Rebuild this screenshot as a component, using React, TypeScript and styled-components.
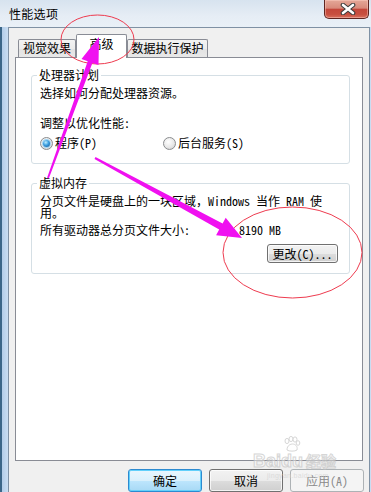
import React from "react";
import styled, { createGlobalStyle, css } from "styled-components";

const FONT = `"Noto Sans Mono CJK SC", "Noto Sans CJK SC", "Liberation Sans", sans-serif`;

const Global = createGlobalStyle`
  html, body { margin: 0; padding: 0; background: #2f5677; }
  body { font-family: ${FONT}; font-size: 12px; color: #000; }
  * { box-sizing: border-box; }
`;

const Window = styled.div`
  position: relative;
  width: 371px;
  height: 492px;
  overflow: hidden;
  display: flex;
  flex-direction: column;
  background: linear-gradient(
    to right,
    #3b6688 0px,
    #3b6688 2px,
    #b3cde9 2px,
    #c9ddf2 8px
  );
`;

const TitleBar = styled.div`
  height: 27px;
  flex: none;
  display: flex;
  align-items: flex-start;
  padding-left: 9px;
  background: linear-gradient(#d7e3ef, #e6edf5 60%, #e9f0f7);
`;

const TitleText = styled.span`
  margin-top: 7px;
  line-height: 14px;
  font-size: 12px;
  color: #000;
  letter-spacing: 0.3px;
`;

const CloseButton = styled.div`
  margin-left: auto;
  margin-right: 2px;
  width: 45px;
  height: 19px;
  border: 1px solid #5e2520;
  border-top: none;
  border-radius: 0 0 5px 5px;
  background: linear-gradient(
    #e4a898 0%,
    #d88a7b 45%,
    #c4473a 52%,
    #c85040 80%,
    #d8705e 100%
  );
  box-shadow: inset 0 0 0 1px rgba(255, 210, 200, 0.45);
  display: flex;
  align-items: center;
  justify-content: center;
  padding-left: 3px;
`;

const Body = styled.div`
  flex: 1;
  margin-left: 8px;
  margin-right: 1px;
  border: 1px solid #7f91a4;
  border-bottom: none;
  background: #f0f0f0;
  padding: 6px 5px 0 6px;
  display: flex;
  flex-direction: column;
`;

const TabRow = styled.div`
  height: 24px;
  margin-bottom: -1px;
  padding-left: 3px;
  display: flex;
  align-items: flex-end;
  position: relative;
  z-index: 1;
`;

const Tab = styled.div<{ $w: number; $active?: boolean }>`
  width: ${(p) => p.$w}px;
  flex: none;
  border: 1px solid #898c95;
  border-bottom: none;
  border-radius: 2px 2px 0 0;
  text-align: center;
  white-space: nowrap;
  ${(p) =>
    p.$active
      ? css`
          height: 24px;
          line-height: 18px;
          background: #ffffff;
        `
      : css`
          height: 18px;
          margin-bottom: 1px;
          line-height: 16px;
          background: linear-gradient(#f3f3f3, #ececec 50%, #e2e2e2 50%, #e8e8e8);
        `}
`;

const Panel = styled.div`
  width: 348px;
  height: 404px;
  flex: none;
  border: 1px solid #898c95;
  background: #ffffff;
  padding: 10px 12px 0 15px;
  display: flex;
  flex-direction: column;
`;

const GroupBox = styled.fieldset<{ $mt?: number; $pb: number }>`
  margin: ${(p) => p.$mt ?? 0}px 0 0 0;
  padding: 0 11px ${(p) => p.$pb}px 8px;
  min-width: 0;
  border: 1px solid #d5dfe5;
  border-radius: 3px;
`;

const Legend = styled.legend`
  margin-left: -3px;
  padding: 0 2px;
  line-height: 14px;
  font-size: 12px;
`;

const Line = styled.div<{ $mt: number; $lh?: number }>`
  margin-top: ${(p) => p.$mt}px;
  line-height: ${(p) => p.$lh ?? 14}px;
  white-space: nowrap;
`;

const RadioRow = styled.div`
  margin-top: 6px;
  height: 14px;
  display: flex;
  align-items: center;
`;

const RadioItem = styled.label<{ $w?: number }>`
  display: flex;
  align-items: center;
  gap: 2px;
  ${(p) => (p.$w ? `width: ${p.$w}px;` : "")}
  white-space: nowrap;
  line-height: 14px;
`;

const RadioCircle = styled.span<{ $checked?: boolean }>`
  position: relative;
  flex: none;
  width: 13px;
  height: 13px;
  border-radius: 50%;
  border: 1px solid #8a8c8e;
  background: radial-gradient(circle at 40% 35%, #ffffff 0%, #e8e8e8 55%, #c9c9c9 100%);
  ${(p) =>
    p.$checked &&
    css`
      &::after {
        content: "";
        position: absolute;
        left: 2px;
        top: 2px;
        width: 7px;
        height: 7px;
        border-radius: 50%;
        background: radial-gradient(circle at 40% 35%, #bfeeff 0%, #3b9ee0 45%, #0d4f8f 100%);
        box-shadow: 0 0 0 1px #9fd3f3;
      }
    `}
`;

const InfoRow = styled.div`
  margin-top: 4px;
  display: flex;
  line-height: 14px;
  white-space: nowrap;
`;

const InfoLabel = styled.span`
  width: 199px;
  flex: none;
`;

const GroupButtons = styled.div`
  margin-top: 7px;
  display: flex;
  justify-content: flex-end;
`;

const PushButton = styled.button<{ $w: number; $h: number; $variant?: "default" | "disabled" }>`
  width: ${(p) => p.$w}px;
  height: ${(p) => p.$h}px;
  padding: 0;
  font-family: ${FONT};
  font-size: 12px;
  line-height: 14px;
  color: #000;
  border-radius: 3px;
  border: 1px solid #707070;
  background: linear-gradient(#f2f2f2 0%, #ebebeb 50%, #dddddd 50%, #cfcfcf 100%);
  box-shadow: inset 0 0 0 1px rgba(255, 255, 255, 0.75);
  ${(p) =>
    p.$variant === "default" &&
    css`
      border-color: #2c8ad0;
      background: linear-gradient(#eaf6fd 0%, #d9f0fc 50%, #bee6fd 50%, #a7d9f5 100%);
      box-shadow: inset 0 0 0 1px #62d0fb;
    `}
  ${(p) =>
    p.$variant === "disabled" &&
    css`
      border-color: #adb2b5;
      background: #f4f4f4;
      color: #8a8a8a;
      box-shadow: none;
    `}
`;

const ButtonRow = styled.div`
  margin-top: 8px;
  display: flex;
  justify-content: flex-end;
  gap: 7px;
`;

const Overlay = styled.svg`
  position: absolute;
  left: 0;
  top: 0;
  width: 371px;
  height: 492px;
  pointer-events: none;
  z-index: 5;
`;

const Watermark = styled.div`
  position: absolute;
  left: 253px;
  top: 436px;
  z-index: 4;
  pointer-events: none;
  display: flex;
  flex-direction: column;
  align-items: flex-start;
  opacity: 0.75;
`;

const WatermarkBrand = styled.div`
  display: flex;
  align-items: flex-end;
  font-family: "Liberation Sans", sans-serif;
  font-weight: bold;
  font-size: 18px;
  line-height: 18px;
  color: rgba(255, 255, 255, 0.6);
  -webkit-text-stroke: 1px #c9c9c9;
`;

const WatermarkDu = styled.div`
  display: flex;
  flex-direction: column;
  align-items: center;
`;

const WatermarkCn = styled.span`
  margin-left: 3px;
  font-family: "Noto Sans CJK SC", sans-serif;
  font-weight: bold;
  font-size: 15px;
  line-height: 18px;
`;

const WatermarkUrl = styled.span`
  margin-left: 14px;
  margin-top: 2px;
  font-family: "Liberation Sans", sans-serif;
  font-size: 7px;
  line-height: 8px;
  color: #d4d4d4;
  letter-spacing: 0.3px;
`;

export default function App() {
  return (
    <>
      <Global />
      <Window>
        <TitleBar>
          <TitleText>性能选项</TitleText>
          <CloseButton>
            <svg width="16" height="12" viewBox="0 0 16 12">
              <path d="M3 2 L13 10 M13 2 L3 10" stroke="#3b3b3b" strokeWidth="4.6" strokeLinecap="round" fill="none" />
              <path d="M3 2 L13 10 M13 2 L3 10" stroke="#ffffff" strokeWidth="2.6" strokeLinecap="round" fill="none" />
            </svg>
          </CloseButton>
        </TitleBar>
        <Body>
          <TabRow>
            <Tab $w={58}>视觉效果</Tab>
            <Tab $w={51} $active>
              高级
            </Tab>
            <Tab $w={81}>数据执行保护</Tab>
          </TabRow>
          <Panel>
            <GroupBox $pb={13}>
              <Legend>处理器计划</Legend>
              <Line $mt={4}>选择如何分配处理器资源。</Line>
              <Line $mt={16}>调整以优化性能:</Line>
              <RadioRow>
                <RadioItem $w={123}>
                  <RadioCircle $checked />
                  程序(P)
                </RadioItem>
                <RadioItem>
                  <RadioCircle />
                  后台服务(S)
                </RadioItem>
              </RadioRow>
            </GroupBox>
            <GroupBox $mt={12} $pb={10}>
              <Legend>虚拟内存</Legend>
              <Line $mt={5} $lh={12}>
                分页文件是硬盘上的一块区域，Windows 当作 RAM 使
                <br />
                用。
              </Line>
              <InfoRow>
                <InfoLabel>所有驱动器总分页文件大小:</InfoLabel>
                <span>8190 MB</span>
              </InfoRow>
              <GroupButtons>
                <PushButton $w={71} $h={19}>更改(C)...</PushButton>
              </GroupButtons>
            </GroupBox>
          </Panel>
          <ButtonRow>
            <PushButton $w={74} $h={23} $variant="default">
              确定
            </PushButton>
            <PushButton $w={74} $h={23}>
              取消
            </PushButton>
            <PushButton $w={74} $h={23} $variant="disabled">
              应用(A)
            </PushButton>
          </ButtonRow>
        </Body>

        <Watermark>
          <WatermarkBrand>
            <span>Bai</span>
            <WatermarkDu>
              <svg width="20" height="16" viewBox="0 0 20 16">
                <g fill="rgba(255,255,255,0.6)" stroke="#c9c9c9" strokeWidth="1">
                  <ellipse cx="5" cy="5" rx="2" ry="2.6" />
                  <ellipse cx="9" cy="3" rx="2" ry="2.6" />
                  <ellipse cx="13" cy="3.5" rx="2" ry="2.6" />
                  <ellipse cx="16" cy="7" rx="1.8" ry="2.3" />
                  <path d="M5 14 C5 9 9 8 10.5 8 C13 8 16 10 15 14 C13 15.5 7 15.5 5 14 Z" />
                </g>
              </svg>
              <span>du</span>
            </WatermarkDu>
            <WatermarkCn>经验</WatermarkCn>
          </WatermarkBrand>
          <WatermarkUrl>jingyan.baidu.com</WatermarkUrl>
        </Watermark>

        <Overlay viewBox="0 0 371 492">
          <ellipse cx="97.5" cy="39.5" rx="36.5" ry="24.5" fill="none" stroke="#ee3b4f" strokeWidth="1" />
          <ellipse cx="292.5" cy="252.5" rx="69.5" ry="45.5" fill="none" stroke="#ee3b4f" strokeWidth="1" />
          <polygon
            fill="#f010f0"
            points="47.1,177.7 87.7,61.2 81.5,58.9 99,37 98.5,65.1 92.4,62.9 48.9,178.3"
          />
          <polygon
            fill="#f010f0"
            points="95.5,157.1 222.6,223.4 225.7,217.7 242,238 216.1,235.3 219.2,229.6 94.5,158.9"
          />
        </Overlay>
      </Window>
    </>
  );
}
